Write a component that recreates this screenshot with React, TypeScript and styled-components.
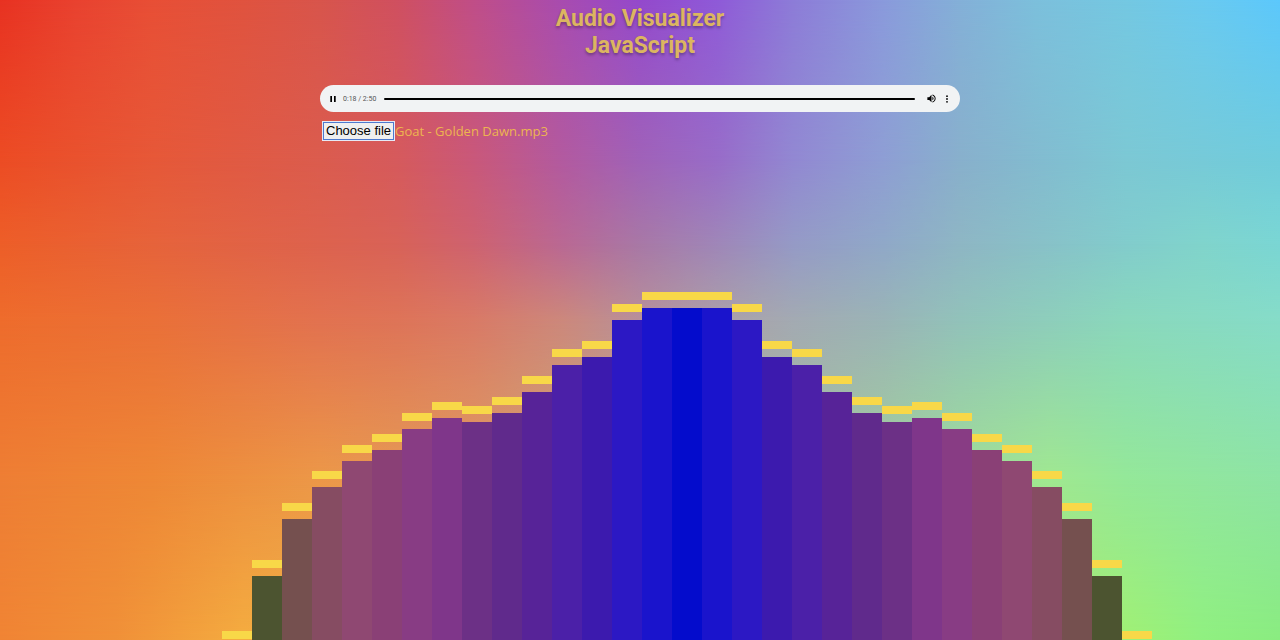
import React, { useRef, useState } from "react";
import styled, { createGlobalStyle } from "styled-components";

const GlobalStyle = createGlobalStyle`
  * { box-sizing: border-box; }
  body { margin: 0; font-family: "Open Sans", "Noto Sans", sans-serif; }
`;

type Stop = [number, string];
type BandData = { from: number; to: number; stops: Stop[] };

/* Horizontal colour bands; each one fades in over the last between `from` and `to` percent of the page height. */
const bands: BandData[] = [
  { from: 0, to: 0, stops: [[0, "#e83222"], [6, "#e94230"], [12, "#e84f36"], [19, "#e0533f"], [25, "#d8554c"], [31, "#d05060"], [37, "#c04e88"], [44, "#a84cb0"], [50, "#9449cc"], [56, "#8f5ad8"], [62, "#8d7cd8"], [69, "#8a9adc"], [75, "#84b0d8"], [81, "#7cc0dc"], [88, "#74c8e2"], [94, "#6acaf0"], [100, "#5cc8fc"]] },
  { from: 0, to: 25, stops: [[0, "#ec4c24"], [12, "#e65838"], [25, "#db5c4e"], [31, "#d65a5c"], [37, "#c9587a"], [44, "#b25aa0"], [50, "#a062b8"], [56, "#986cc8"], [62, "#9288d2"], [69, "#8e9ed4"], [75, "#88b0cc"], [88, "#7cc8d4"], [100, "#70ccdc"]] },
  { from: 25, to: 38, stops: [[0, "#ed5e28"], [12, "#e6633b"], [25, "#dd624e"], [31, "#d86258"], [37, "#ce6270"], [44, "#b96894"], [50, "#a878a6"], [56, "#9f86b8"], [62, "#959ac6"], [69, "#90a8c8"], [75, "#8eb6c4"], [88, "#82cccc"], [94, "#80d4cc"], [100, "#7ad6d4"]] },
  { from: 38, to: 50, stops: [[0, "#ee6c2c"], [12, "#ea7038"], [25, "#e27250"], [31, "#de7458"], [37, "#d97a66"], [44, "#cc887c"], [50, "#b8909a"], [56, "#aca0a8"], [62, "#a3aab2"], [69, "#9ab4b6"], [75, "#92c2ba"], [88, "#8ad8bc"], [100, "#86dcc8"]] },
  { from: 50, to: 75, stops: [[0, "#ee7e34"], [12, "#ee8836"], [25, "#ec9848"], [37, "#e09c60"], [62, "#a8c0a0"], [75, "#a0dc98"], [82, "#a0e890"], [88, "#94e898"], [100, "#8ee4a4"]] },
  { from: 75, to: 100, stops: [[0, "#f08434"], [9, "#f09038"], [19, "#f4ac40"], [50, "#d8c060"], [88, "#a0f074"], [94, "#90f080"], [100, "#8aec80"]] },
];

const Page = styled.div`
  position: relative;
  isolation: isolate;
  display: flex;
  flex-direction: column;
  min-height: 100vh;
  overflow: hidden;
`;

const Backdrop = styled.div`
  position: absolute;
  inset: 0;
  z-index: -1;
`;

const Band = styled.div<{ $band: BandData }>`
  position: absolute;
  inset: 0;
  background: linear-gradient(90deg, ${(p) => p.$band.stops.map(([at, c]) => `${c} ${at}%`).join(", ")});
  ${(p) =>
    p.$band.to > 0 &&
    `mask-image: linear-gradient(transparent ${p.$band.from}%, black ${p.$band.to}%);`}
`;

const Title = styled.h1`
  margin: 0;
  padding-top: 5px;
  font: 700 23px/27px Roboto, sans-serif;
  color: #dcb560;
  text-align: center;
  text-shadow: 0 2px 3px rgba(0, 0, 0, 0.3);
`;

const Controls = styled.section`
  width: 50%;
  margin: 26px auto 0;
`;

const Player = styled.div`
  display: flex;
  align-items: center;
  height: 27px;
  padding: 0 9px;
  border-radius: 14px;
  background: #f1f3f4;
`;

const IconButton = styled.button`
  display: flex;
  align-items: center;
  justify-content: center;
  width: 8px;
  height: 16px;
  padding: 0;
  border: 0;
  background: none;
  color: #000;
`;

const VolumeButton = styled(IconButton)`
  width: 12px;
  margin: 0 6px 0 10px;
`;

const Time = styled.span`
  margin: 0 8px 0 6px;
  font: 7px/12px Roboto, sans-serif;
  color: #555;
  white-space: nowrap;
`;

const Seek = styled.input`
  appearance: none;
  flex: 1;
  min-width: 0;
  height: 2px;
  margin: 0;
  border-radius: 1px;
  background: #000;

  &::-webkit-slider-thumb {
    appearance: none;
    width: 1px;
    height: 2px;
  }
`;

const FileRow = styled.div`
  display: flex;
  align-items: center;
  gap: 1px;
  padding: 10px 3px;
`;

const FileButton = styled.button`
  height: 18px;
  padding: 0 2px;
  border: 1px solid #4d79cf;
  outline: 1px solid #e6eaf6;
  background: #efefef;
  font: 13px/16px "Liberation Sans", Arial, sans-serif;
  color: #000;
`;

const FileName = styled.span`
  font-size: 13px;
  line-height: 18px;
  color: #edb54f;
`;

const Chart = styled.div`
  display: flex;
  align-items: flex-end;
  justify-content: center;
  margin-top: auto;
  margin-bottom: -7px;
  padding-left: 94px;
`;

const Column = styled.div`
  flex: 0 0 30px;
`;

const Cap = styled.div`
  height: 8px;
  margin-bottom: 8px;
  background: #f8d848;
`;

const Bar = styled.div<{ $color: string }>`
  background: ${(p) => p.$color};
`;

const rising = [
  { level: 0, color: "#3c5020" },
  { level: 71, color: "#4c5430" },
  { level: 128, color: "#75504f" },
  { level: 160, color: "#864c62" },
  { level: 186, color: "#8f4872" },
  { level: 197, color: "#8a4076" },
  { level: 218, color: "#883c84" },
  { level: 229, color: "#7f368a" },
  { level: 225, color: "#6c3086" },
  { level: 234, color: "#602a8c" },
  { level: 255, color: "#572398" },
  { level: 282, color: "#4b20a8" },
  { level: 290, color: "#3c1aae" },
  { level: 327, color: "#2c18c4" },
  { level: 339, color: "#1a14cc" },
];
const bars = [...rising, { level: 339, color: "#040ccc" }, ...[...rising].reverse()];

export default function App() {
  const picker = useRef<HTMLInputElement>(null);
  const [name, setName] = useState("Goat - Golden Dawn.mp3");

  return (
    <Page>
      <GlobalStyle />
      <Backdrop aria-hidden="true">
        {bands.map((band) => (
          <Band key={band.to} $band={band} />
        ))}
      </Backdrop>
      <Title>
        Audio Visualizer
        <br />
        JavaScript
      </Title>
      <Controls>
        <Player>
          <IconButton type="button" aria-label="Pause">
            <svg width="6" height="6" viewBox="0 0 6 6" fill="currentColor">
              <path d="M0.3 0h1.7v6H0.3zM4 0h1.7v6H4z" />
            </svg>
          </IconButton>
          <Time>0:18 / 2:50</Time>
          <Seek type="range" aria-label="Seek" min={0} max={170} defaultValue={18} />
          <VolumeButton type="button" aria-label="Mute">
            <svg width="11" height="11" viewBox="0 0 24 24" fill="currentColor">
              <path d="M3 9v6h4l5 5V4L7 9H3zm13.500 3c0-1.770-1.020-3.290-2.500-4.030v8.050c1.480-.730 2.500-2.250 2.500-4.020zM14 3.230v2.060c2.890.860 5 3.540 5 6.710s-2.110 5.850-5 6.710v2.060c4.010-.910 7-4.490 7-8.770s-2.990-7.860-7-8.770z" />
            </svg>
          </VolumeButton>
          <IconButton type="button" aria-label="More options">
            <svg width="4" height="10" viewBox="0 0 4 10" fill="currentColor">
              <circle cx="2" cy="2.200" r="0.900" />
              <circle cx="2" cy="5" r="0.900" />
              <circle cx="2" cy="7.800" r="0.900" />
            </svg>
          </IconButton>
        </Player>
        <FileRow>
          <FileButton type="button" onClick={() => picker.current?.click()}>
            Choose file
          </FileButton>
          <FileName>{name}</FileName>
          <input
            ref={picker}
            type="file"
            accept="audio/*"
            aria-label="Audio file"
            hidden
            onChange={(e) => e.target.files?.[0] && setName(e.target.files[0].name)}
          />
        </FileRow>
      </Controls>
      <Chart role="img" aria-label="Frequency levels">
        {bars.map((bar, i) => (
          <Column key={i}>
            <Cap />
            <Bar $color={bar.color} style={{ height: bar.level }} />
          </Column>
        ))}
      </Chart>
    </Page>
  );
}
